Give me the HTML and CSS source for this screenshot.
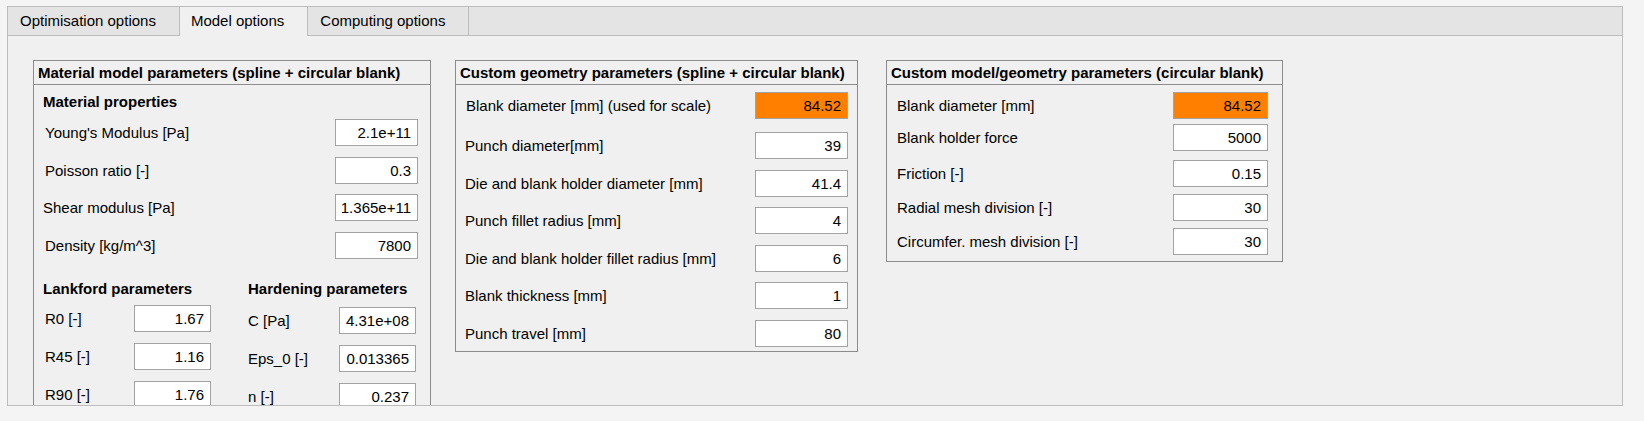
FILE: index.html
```html
<!DOCTYPE html>
<html>
<head>
<meta charset="utf-8">
<link rel="stylesheet" href="styles.css">
</head>
<body>
<div class="frame">
  <div class="tabs">
    <div class="tab">Optimisation options</div>
    <div class="tab active">Model options</div>
    <div class="tab">Computing options</div>
  </div>
  <div class="content">
    <section class="panel p1">
      <div class="ph">Material model parameters (spline + circular blank)</div>
      <div class="sub">Material properties</div>
      <div class="rows r1">
        <div class="row"><span>Young's Modulus [Pa]</span><div class="field">2.1e+11</div></div>
        <div class="row"><span>Poisson ratio [-]</span><div class="field">0.3</div></div>
        <div class="row"><span class="shift">Shear modulus [Pa]</span><div class="field">1.365e+11</div></div>
        <div class="row"><span>Density [kg/m^3]</span><div class="field">7800</div></div>
      </div>
      <div class="cols">
        <div class="col left">
          <div class="sub2">Lankford parameters</div>
          <div class="rows small">
            <div class="row"><span>R0 [-]</span><div class="field">1.67</div></div>
            <div class="row"><span>R45 [-]</span><div class="field">1.16</div></div>
            <div class="row"><span>R90 [-]</span><div class="field">1.76</div></div>
          </div>
        </div>
        <div class="col right">
          <div class="sub2">Hardening parameters</div>
          <div class="rows small shifted">
            <div class="row"><span>C [Pa]</span><div class="field">4.31e+08</div></div>
            <div class="row"><span>Eps_0 [-]</span><div class="field">0.013365</div></div>
            <div class="row"><span>n [-]</span><div class="field">0.237</div></div>
          </div>
        </div>
      </div>
    </section>
    <section class="panel p2">
      <div class="ph">Custom geometry parameters (spline + circular blank)</div>
      <div class="rows r2">
        <div class="row first"><span>Blank diameter [mm] (used for scale)</span><div class="field orange">84.52</div></div>
        <div class="row"><span>Punch diameter[mm]</span><div class="field">39</div></div>
        <div class="row"><span>Die and blank holder diameter [mm]</span><div class="field">41.4</div></div>
        <div class="row"><span>Punch fillet radius [mm]</span><div class="field">4</div></div>
        <div class="row"><span>Die and blank holder fillet radius [mm]</span><div class="field">6</div></div>
        <div class="row"><span>Blank thickness [mm]</span><div class="field">1</div></div>
        <div class="row"><span>Punch travel [mm]</span><div class="field">80</div></div>
      </div>
    </section>
    <section class="panel p3">
      <div class="ph">Custom model/geometry parameters (circular blank)</div>
      <div class="rows r3">
        <div class="row first"><span>Blank diameter [mm]</span><div class="field orange">84.52</div></div>
        <div class="row second"><span>Blank holder force</span><div class="field">5000</div></div>
        <div class="row"><span>Friction [-]</span><div class="field">0.15</div></div>
        <div class="row"><span>Radial mesh division [-]</span><div class="field">30</div></div>
        <div class="row"><span>Circumfer. mesh division [-]</span><div class="field">30</div></div>
      </div>
    </section>
  </div>
</div>
</body>
</html>
```
FILE: styles.css
```css
html, body {
  margin: 0;
  padding: 0;
}
body {
  background: #f4f4f4;
  font-family: "Liberation Sans", Arial, sans-serif;
  font-size: 15px;
  color: #000;
}
.frame {
  margin: 6px 0 0 7px;
  width: 1616px;
  height: 400px;
  box-sizing: border-box;
  border: 1px solid #bdbdbd;
  background: #f0f0f0;
  display: flex;
  flex-direction: column;
  overflow: hidden;
}
.tabs {
  flex: none;
  height: 29px;
  box-sizing: border-box;
  display: flex;
  background: #e4e4e4;
  border-bottom: 1px solid #bdbdbd;
}
.tab {
  padding: 0 23px 0 12px;
  line-height: 28px;
  border-right: 1px solid #bdbdbd;
  white-space: nowrap;
}
.tab.active {
  background: #f0f0f0;
  height: 29px;
  padding-left: 11px;
}
.content {
  flex: 1;
  min-height: 0;
  overflow: hidden;
  display: flex;
  align-items: flex-start;
  padding: 24px 0 0 25px;
}
.panel {
  flex: none;
  box-sizing: border-box;
  border: 1px solid #8c8c8c;
  background: #f0f0f0;
}
.p1 { width: 398px; margin-right: 24px; padding-bottom: 20px; }
.p2 { width: 403px; margin-right: 28px; padding-bottom: 4px; }
.p3 { width: 397px; padding-bottom: 6px; }
.ph {
  height: 24px;
  box-sizing: border-box;
  line-height: 23px;
  border-bottom: 1px solid #8c8c8c;
  padding-left: 4px;
  font-weight: bold;
  white-space: nowrap;
}
.sub {
  font-weight: bold;
  line-height: 20px;
  margin: 7px 0 0 9px;
}
.rows {
  display: flex;
  flex-direction: column;
}
.row {
  display: flex;
  align-items: center;
  justify-content: space-between;
  height: 27px;
  white-space: nowrap;
}
.field {
  box-sizing: border-box;
  height: 27px;
  line-height: 25px;
  border: 1px solid #a3a3a3;
  background: #fff;
  text-align: right;
  padding-right: 6px;
}
.field.orange {
  background: #ff8000;
}
.r1 {
  margin-top: 7px;
  gap: 10.67px;
  padding: 0 12px 0 11px;
}
.r1 .field { width: 83px; }
.r1 .shift { margin-left: -2px; }
.cols {
  display: flex;
  margin-top: 20px;
  padding-left: 9px;
}
.col { width: 168px; }
.col.left { margin-right: 37px; }
.sub2 {
  font-weight: bold;
  line-height: 20px;
  white-space: nowrap;
}
.small {
  margin-top: 6px;
  gap: 11px;
}
.small .field { width: 77px; }
.left .row span { margin-left: 2px; }
.shifted { padding-top: 2px; }
.r2 {
  margin-top: 7px;
  gap: 10.5px;
  padding: 0 9px 0 9px;
}
.r2 .first { margin-bottom: 2.5px; }
.r2 .first span { margin-left: 1px; }
.r2 .field { width: 93px; }
.r3 {
  margin-top: 7px;
  gap: 7px;
  padding: 0 14px 0 10px;
}
.r3 .first { margin-bottom: -2px; }
.r3 .second { margin-bottom: 2px; }
.r3 .field { width: 95px; }
```
